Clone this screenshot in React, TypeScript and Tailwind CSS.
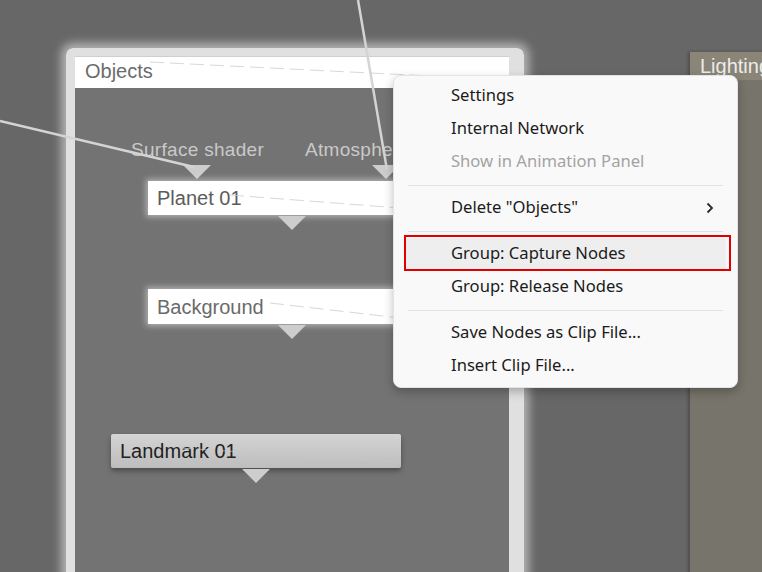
import React from "react";

const arial = { fontFamily: '"Liberation Sans", Arial, sans-serif' };
const menuFont = { fontFamily: '"Noto Sans", "Open Sans", sans-serif' };

function Tri({ className }: { className: string }) {
  return (
    <svg className={"absolute " + className} width="28" height="14" viewBox="0 0 28 14">
      <path d="M0 0 L28 0 L14 14 Z" fill="#cdcdcd" />
    </svg>
  );
}

function Item({ label, disabled, arrow }: { label: string; disabled?: boolean; arrow?: boolean }) {
  return (
    <div
      className={
        "mx-[11px] flex h-[33px] items-center justify-between pb-[2px] pl-[46px] pr-[11px] text-[16.6px] " +
        (disabled ? "text-[#a3a3a3]" : "text-[#1b1b1b]")
      }
    >
      <span>{label}</span>
      {arrow && (
        <svg width="10" height="14" viewBox="0 0 10 14">
          <path d="M2.5 2.5 L7 7 L2.5 11.5" fill="none" stroke="#2a2a2a" strokeWidth="1.8" />
        </svg>
      )}
    </div>
  );
}

function Sep() {
  return (
    <div className="flex h-[13px] items-center px-[14px]">
      <div className="h-px w-full bg-[#e2e2e2]" />
    </div>
  );
}

export default function App() {
  return (
    <div className="relative h-[572px] w-[762px] overflow-hidden bg-[#676767]" style={arial}>
      {/* Lighting panel */}
      <div className="absolute left-[690px] top-[52px] flex h-[540px] w-[90px] flex-col bg-[#77746b] shadow-[-2px_0_3px_rgba(0,0,0,0.25)]">
        <div className="flex h-[28px] items-center overflow-hidden whitespace-nowrap bg-[#8a8577] pl-[10px] text-[20px] text-[#ececec]">Lighting</div>
      </div>

      {/* Objects group */}
      <div className="absolute left-[66px] top-[48px] flex h-[560px] w-[458px] flex-col rounded-[7px] border-t-[8px] border-r-[15px] border-b-[8px] border-l-[9px] border-[#e0e0e0] shadow-[0_0_10px_5px_rgba(255,255,255,0.5)]">
        <div className="flex h-[32px] items-center border-t border-[#cfcfcf] bg-white pb-[3px] pl-[10px] text-[20px] text-[#6b6b6b]">
          Objects
        </div>
        <div className="flex-1 bg-[#737373]" />
      </div>

      {/* Port labels */}
      <div className="absolute left-[131px] top-[136px] text-[19px] tracking-[0.3px] text-[#c9c9c9]">Surface shader</div>
      <div className="absolute left-[305px] top-[136px] text-[19px] tracking-[0.3px] text-[#c9c9c9]">Atmosphere</div>
      <Tri className="left-[183px] top-[165px]" />
      <Tri className="left-[372px] top-[165px]" />

      {/* Planet 01 */}
      <div className="absolute left-[148px] top-[181px] flex h-[34px] w-[290px] items-center bg-white pl-[9px] text-[20px] text-[#5c5c5c] shadow-[0_0_6px_2px_rgba(255,255,255,0.45)]">
        Planet 01
      </div>
      <Tri className="left-[278px] top-[216px]" />

      {/* Background */}
      <div className="absolute left-[148px] top-[289px] flex h-[35px] w-[290px] items-center bg-white pl-[9px] text-[20px] text-[#6a6a6a] shadow-[0_0_6px_2px_rgba(255,255,255,0.45)]">
        Background
      </div>
      <Tri className="left-[278px] top-[325px]" />

      {/* Landmark 01 */}
      <div className="absolute left-[111px] top-[434px] flex h-[34px] w-[290px] items-center rounded-[2px] bg-gradient-to-b from-[#d4d4d4] to-[#bdbdbd] pl-[9px] text-[20px] text-[#222222] shadow-[0_3px_5px_rgba(0,0,0,0.35)]">
        Landmark 01
      </div>
      <Tri className="left-[242px] top-[469px]" />

      {/* connection lines */}
      <svg className="pointer-events-none absolute left-0 top-0" width="762" height="572">
        <line x1="0" y1="121" x2="194" y2="167" stroke="#d4d4d4" strokeWidth="2.5" />
        <line x1="358" y1="0" x2="387" y2="170" stroke="#d4d4d4" strokeWidth="2.5" />
        <g stroke="#c8c8c8" strokeWidth="1" strokeDasharray="14 6" opacity="0.7">
          <line x1="150" y1="62" x2="510" y2="80" />
          <line x1="230" y1="195" x2="400" y2="208" />
          <line x1="270" y1="303" x2="400" y2="318" />
          <line x1="180" y1="448" x2="398" y2="462" />
        </g>
      </svg>

      {/* Context menu */}
      <div
        className="absolute left-[393px] top-[75px] w-[345px] rounded-[8px] border border-[#e3e3e3] bg-[#f9f9f9] py-[4px] shadow-[0_4px_10px_rgba(0,0,0,0.25)]"
        style={menuFont}
      >
        <Item label="Settings" />
        <Item label="Internal Network" />
        <Item label="Show in Animation Panel" disabled />
        <Sep />
        <Item label={'Delete "Objects"'} arrow />
        <Sep />
        <div className="relative">
          <div className="mx-[11px] flex h-[33px] items-center rounded-[3px] bg-[#eeeeee] pb-[2px] pl-[46px] text-[16.6px] text-[#1b1b1b]">
            Group: Capture Nodes
          </div>
          <div className="pointer-events-none absolute left-[10px] right-[6px] -top-[3px] bottom-0 border-[2.5px] border-[#e00000]" />
        </div>
        <Item label="Group: Release Nodes" />
        <Sep />
        <Item label="Save Nodes as Clip File..." />
        <Item label="Insert Clip File..." />
      </div>
    </div>
  );
}
